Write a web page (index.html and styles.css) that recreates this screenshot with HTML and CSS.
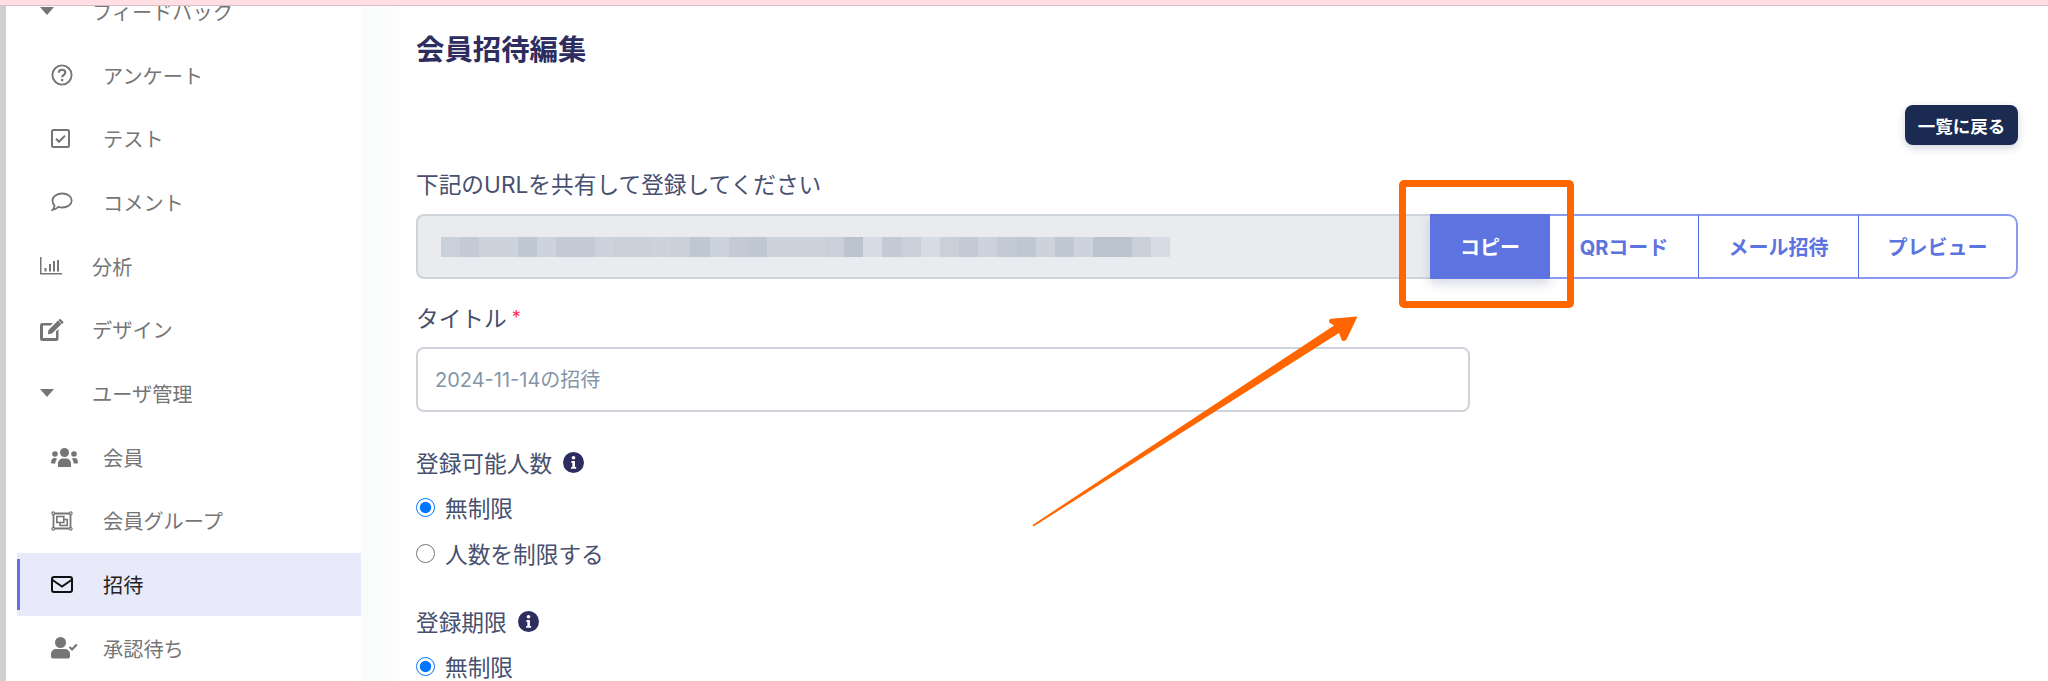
FILE: index.html
```html
<!DOCTYPE html>
<html lang="ja">
<head>
<meta charset="utf-8">
<title>会員招待編集</title>
<link rel="stylesheet" href="styles.css">
</head>
<body>
<div class="topstrip"></div>
<div class="shell">
  <div class="edge"></div>
  <aside class="sidebar">
    <ul class="nav">
      <li class="row parent"><span class="ico"><svg width="14" height="8" viewBox="0 0 14 8"><path class="f" d="M0 0h14L7 8z"/></svg></span>フィードバック</li>
      <li class="row child"><span class="ico"><svg width="22" height="22" viewBox="0 0 22 22"><circle class="s" cx="11" cy="11" r="9.6" stroke-width="1.9"/><path class="s" d="M7.800 8.800c0-1.900 1.400-3.100 3.300-3.100s3.200 1.100 3.200 2.800c0 2.500-3.200 2.600-3.200 4.700" stroke-width="2.100"/><circle class="f" cx="11.100" cy="16" r="1.300"/></svg></span>アンケート</li>
      <li class="row child"><span class="ico"><svg width="19" height="19" viewBox="0 0 19 19"><rect class="s" x="1" y="1" width="17" height="17" rx="1.500" stroke-width="2"/><path class="s" d="M5 9.800l3 3 6-6.200" stroke-width="2"/></svg></span>テスト</li>
      <li class="row child"><span class="ico"><svg width="22" height="20" viewBox="0 0 22 20"><path class="s" d="M11.200 1.500c5.200 0 9.500 3 9.500 7s-4.300 7-9.500 7c-1.300 0-2.600-.2-3.700-.6-1.500 1.300-3.600 2.400-6 3 1-1.200 1.800-2.700 2.100-4.300C2.300 12.400 1.500 10.500 1.500 8.500c0-4 4.400-7 9.700-7z" stroke-width="1.800"/></svg></span>コメント</li>
      <li class="row parent"><span class="ico"><svg width="22" height="18" viewBox="0 0 22 18"><path class="f" d="M0 0h1.500v16H22v1.500H0zM4.500 11h2v3.500h-2zM9 7h2v7.500H9zM13 4h2v10.500h-2zM17 3h2v11.500h-2z"/></svg></span>分析</li>
      <li class="row parent"><span class="ico"><svg width="24" height="22" viewBox="0 0 24 22"><path class="f" d="M2.500 4H13l-2.500 2.500H3V19h13v-6.500l2.500-2.500v9.500a2.500 2.500 0 0 1-2.500 2.500H2.500A2.500 2.500 0 0 1 0 19.500v-13A2.500 2.500 0 0 1 2.500 4z"/><path class="f" d="M18 1.500l3.500 3.500L12 14.500l-4.200.8.700-4.300zM19.200.4a1.300 1.300 0 0 1 1.800 0l2 2a1.300 1.300 0 0 1 0 1.800l-.8.800L18.400 1.200z"/></svg></span>デザイン</li>
      <li class="row parent"><span class="ico"><svg width="14" height="8" viewBox="0 0 14 8"><path class="f" d="M0 0h14L7 8z"/></svg></span>ユーザ管理</li>
      <li class="row child"><span class="ico"><svg width="27" height="19" viewBox="0 0 27 19"><circle class="f" cx="13.500" cy="4.500" r="4.500"/><circle class="f" cx="4" cy="6" r="2.800"/><circle class="f" cx="23" cy="6" r="2.800"/><path class="f" d="M7 19v-3.500C7 12.500 9.500 10.500 12 10.500h3c2.500 0 5 2 5 5V19zM0 14.500c0-2.500 1.500-4.500 3.500-4.500 1 0 2 .2 2.700.8-1.200 1.200-1.800 2.700-1.900 4.700H1a1 1 0 0 1-1-1zM27 14.500c0-2.500-1.500-4.500-3.500-4.500-1 0-2 .2-2.700.8 1.200 1.200 1.800 2.700 1.900 4.700H26a1 1 0 0 0 1-1z"/></svg></span>会員</li>
      <li class="row child"><span class="ico"><svg width="22" height="20" viewBox="0 0 22 20"><path class="s" d="M3 2.500h16M3 17.500h16M2.500 3v14M19.500 3v14" stroke-width="1.800"/><circle class="s" cx="2.200" cy="2.200" r="1.300" stroke-width="1.200"/><circle class="s" cx="19.800" cy="2.200" r="1.300" stroke-width="1.200"/><circle class="s" cx="2.200" cy="17.800" r="1.300" stroke-width="1.200"/><circle class="s" cx="19.800" cy="17.800" r="1.300" stroke-width="1.200"/><path class="s" d="M5.800 5.500h7v6h-7zM9 11.500v3h7.200v-6h-3.400" stroke-width="1.600"/></svg></span>会員グループ</li>
      <li class="row child active"><span class="ico"><svg width="22" height="17" viewBox="0 0 22 17"><rect class="s dark" x="1" y="1" width="20" height="15" rx="2" stroke-width="2"/><path class="s dark" d="M1.500 4l9.500 6.500L20.500 4" stroke-width="2"/></svg></span>招待</li>
      <li class="row child"><span class="ico"><svg width="27" height="22" viewBox="0 0 27 22"><circle class="f" cx="9.500" cy="5.500" r="5.500"/><path class="f" d="M0 19.500v-2.500C0 14 2.500 12 5 12h9c2.500 0 5 2 5 5v2.500a2 2 0 0 1-2 2H2a2 2 0 0 1-2-2z"/><path class="s" d="M18.500 10l2.500 2.500 4.800-5" stroke-width="2.200"/></svg></span>承認待ち</li>
    </ul>
  </aside>
  <main class="main">
    <h1 class="title">会員招待編集</h1>
    <div class="backrow"><a class="back">一覧に戻る</a></div>
    <div class="label first">下記のURLを共有して登録してください</div>
    <div class="group">
      <div class="url">
        <div class="blur">
          <i class="b2"></i><i class="b3"></i><i class="b1"></i><i class="b1"></i><i class="b4"></i><i class="b1"></i><i class="b3"></i><i class="b3"></i><i class="b1"></i><i class="b2"></i><i class="b2"></i><i class="b1"></i><i class="b2"></i><i class="b4"></i><i class="b1"></i><i class="b3"></i><i class="b4"></i><i class="b1"></i><i class="b1"></i><i class="b1"></i><i class="b2"></i><i class="b5"></i><i class="b0"></i><i class="b3"></i><i class="b2"></i><i class="b0"></i><i class="b2"></i><i class="b3"></i><i class="b1"></i><i class="b3"></i><i class="b4"></i><i class="b1"></i><i class="b4"></i><i class="b1"></i><i class="b5"></i><i class="b5"></i><i class="b2"></i><i class="b0"></i>
        </div>
      </div>
      <button class="gbtn copy">コピー</button>
      <button class="gbtn qr">QRコード</button>
      <button class="gbtn mail">メール招待</button>
      <button class="gbtn prev">プレビュー</button>
    </div>
    <div class="label gap-title">タイトル<span class="req">*</span></div>
    <input class="text" type="text" placeholder="2024-11-14の招待">
    <div class="label gap-num">登録可能人数<svg class="info" width="21" height="21" viewBox="0 0 22 22"><circle cx="11" cy="11" r="11" fill="#2d2d5f"/><circle cx="11" cy="6" r="1.900" fill="#fff"/><path d="M8.800 9.500h3.700v6.200h1.300v1.900H8.500v-1.900h1.300v-4.300h-1z" fill="#fff"/></svg></div>
    <div class="radios first-radios">
      <label class="radio"><input type="radio" name="a" checked>無制限</label>
      <label class="radio"><input type="radio" name="a">人数を制限する</label>
    </div>
    <div class="label gap-limit">登録期限<svg class="info" width="21" height="21" viewBox="0 0 22 22"><circle cx="11" cy="11" r="11" fill="#2d2d5f"/><circle cx="11" cy="6" r="1.900" fill="#fff"/><path d="M8.800 9.500h3.700v6.200h1.300v1.900H8.500v-1.900h1.300v-4.300h-1z" fill="#fff"/></svg></div>
    <div class="radios">
      <label class="radio"><input type="radio" name="b" checked>無制限</label>
    </div>
  </main>
</div>
<svg class="annot" width="2048" height="681" viewBox="0 0 2048 681">
  <rect x="1402.500" y="183.500" width="168" height="121" rx="1.500" fill="none" stroke="#ff6600" stroke-width="7"/>
  <path d="M1032.500 525L1334 325.500 1330 323Q1327.500 320 1331 318.800L1357.500 316.500 1346.500 339.500Q1343 342.500 1341.500 339.500L1339 333 1033.500 526.500Z" fill="#ff6600"/>
</svg>
</body>
</html>
```
FILE: styles.css
```css
* { box-sizing: border-box; }
html, body { margin: 0; height: 681px; overflow: hidden; background: #fff; }
body {
  font-family: Inter, "Noto Sans CJK JP", sans-serif;
  display: flex;
  flex-direction: column;
  position: relative;
}
.topstrip {
  height: 6px;
  flex: none;
  background: #ffdfe4;
  border-bottom: 1px solid #d8bcc6;
}
.shell { flex: 1; display: flex; min-height: 0; overflow: hidden; }
.edge { width: 6px; flex: none; background: #d0d0d0; }

.sidebar { width: 355px; flex: none; background: #fff; overflow: hidden; }
.nav { list-style: none; margin: -26.500px 0 0 11px; padding: 0; }
.row {
  height: 63.700px;
  display: flex;
  align-items: center;
  font-family: "Noto Sans CJK JP", sans-serif;
  font-size: 20.200px;
  color: #757575;
}
.parent { padding-left: 23px; }
.child { padding-left: 34px; }
.ico { width: 52px; flex: none; display: flex; align-items: center; }
.f { fill: #757575; }
.s { fill: none; stroke: #757575; }
.s.dark { stroke: #111; }
.active {
  background: #e8eaf9;
  color: #222;
  position: relative;
}
.active::before {
  content: "";
  position: absolute;
  left: 0;
  top: 6px;
  bottom: 6px;
  width: 3px;
  background: #5c73e0;
}

.main {
  flex: 1;
  min-width: 0;
  padding: 24px 30px 0 55px;
  background: linear-gradient(90deg, #fafbfb 0, #fafbfb 25px, #fff 47px);
}
.title {
  margin: 0;
  font-size: 28.400px;
  line-height: 40px;
  font-weight: 700;
  color: #2d2d5f;
}
.backrow { display: flex; justify-content: flex-end; margin-top: 35px; }
.back {
  width: 113px;
  height: 40px;
  display: flex;
  align-items: center;
  justify-content: center;
  background: #1a2a50;
  color: #fff;
  font-size: 17.500px;
  font-weight: 700;
  border-radius: 8px;
  box-shadow: 0 3px 8px rgba(26, 42, 80, .2);
}
.label {
  display: flex;
  align-items: center;
  height: 30px;
  font-size: 22.700px;
  color: #47506f;
}
.first { margin-top: 23px; }
.gap-title { margin-top: 23px; }
.gap-num { margin-top: 35px; }
.gap-limit { margin-top: 30px; }
.req { color: #ff2d55; font-size: 18px; margin-left: 5px; }
.info { margin-left: 11px; }

.group {
  display: flex;
  height: 65px;
  margin-top: 16px;
}
.url {
  flex: 1;
  min-width: 0;
  background: #e9ebef;
  border: 2px solid #ced4da;
  border-right: 0;
  border-radius: 8px 0 0 8px;
  display: flex;
  align-items: center;
  padding-left: 23px;
}
.blur { display: flex; height: 20px; }
.blur i { display: block; width: 19.200px; height: 100%; }
.b0 { background: #d7dbe3; }
.b1 { background: #ccd3dc; }
.b2 { background: #c9d0da; }
.b3 { background: #c3cad5; }
.b4 { background: #bfc7d2; }
.b5 { background: #bac3ce; }
.gbtn {
  flex: none;
  height: 100%;
  padding: 0;
  font-family: inherit;
  font-size: 20px;
  font-weight: 700;
  color: #5c73e0;
  background: #fff;
  border: 2px solid #8a9af2;
  border-left: 0;
  border-radius: 0;
}
.copy {
  width: 120px;
  color: #fff;
  background: #5c73e0;
  border: 0;
  box-shadow: 0 5px 10px rgba(60, 70, 130, .2);
}
.qr, .mail { border-right: 1px solid #5068e6; }
.qr { width: 149px; }
.mail { width: 160px; }
.prev { width: 159px; border-radius: 0 10px 10px 0; }

.text {
  display: block;
  width: 1054px;
  height: 65px;
  margin-top: 15px;
  padding: 0 17px;
  font-family: inherit;
  font-size: 20px;
  color: #333;
  background: #fff;
  border: 2px solid #ced4da;
  border-radius: 8px;
  outline: 0;
}
.text::placeholder { color: #8495aa; opacity: 1; }

.radios { margin-top: 7px; }
.radio {
  display: flex;
  align-items: center;
  height: 46px;
  font-size: 22.700px;
  color: #47506f;
}
.radio input {
  width: 19px;
  height: 19px;
  margin: 0 10px 0 0;
}
.annot { position: absolute; left: 0; top: 0; pointer-events: none; }
```
